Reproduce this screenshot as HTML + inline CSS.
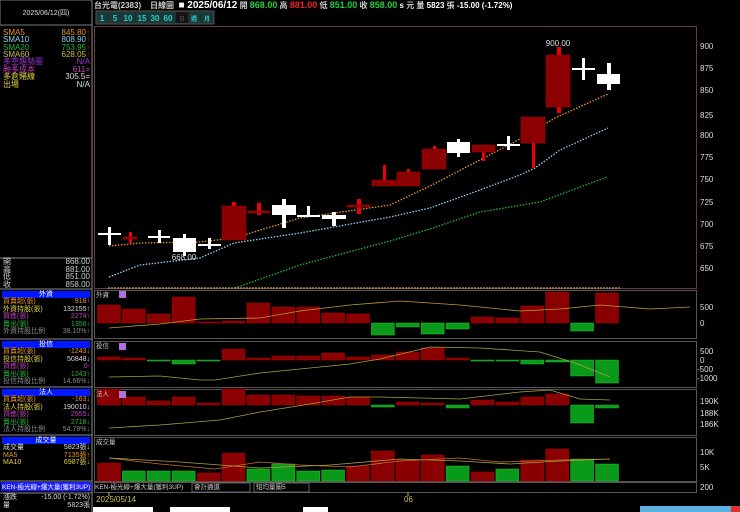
<!DOCTYPE html><html><head><meta charset="utf-8"><style>
body{margin:0;background:#000;width:740px;height:512px;overflow:hidden;position:relative;font-family:"Liberation Sans","Noto Sans CJK TC",sans-serif}
.t{position:absolute;font-size:8px;white-space:nowrap;line-height:9px}
.r{text-align:right}
</style></head><body>
<svg width="740" height="512" style="position:absolute;left:0;top:0" font-family="Liberation Sans, Noto Sans CJK TC, sans-serif">
<rect x="0" y="0" width="92" height="25" fill="none" stroke="#777" stroke-width="1"/>
<line x1="92" y1="0" x2="92" y2="512" stroke="#888"/>
<line x1="0" y1="258" x2="92" y2="258" stroke="#888"/>
<line x1="0" y1="289" x2="92" y2="289" stroke="#888"/>
<line x1="0" y1="339" x2="92" y2="339" stroke="#888"/>
<line x1="0" y1="387" x2="92" y2="387" stroke="#888"/>
<line x1="0" y1="435" x2="92" y2="435" stroke="#888"/>
<line x1="0" y1="481" x2="92" y2="481" stroke="#888"/>
<rect x="2" y="291" width="88" height="7" fill="#0018ff"/>
<rect x="2" y="341" width="88" height="7" fill="#0018ff"/>
<rect x="2" y="389" width="88" height="7" fill="#0018ff"/>
<rect x="2" y="437" width="88" height="7" fill="#0018ff"/>
<rect x="1" y="482" width="90" height="9" fill="#1a1aff"/>
<line x1="0" y1="493" x2="92" y2="493" stroke="#888"/>
<rect x="94.5" y="26.5" width="602" height="262" fill="none" stroke="#6a3a4a"/>
<rect x="94.5" y="290.5" width="602" height="48" fill="none" stroke="#555"/>
<rect x="94.5" y="341.5" width="602" height="46" fill="none" stroke="#555"/>
<rect x="94.5" y="389.5" width="602" height="46" fill="none" stroke="#555"/>
<rect x="94.5" y="437.5" width="602" height="44" fill="none" stroke="#555"/>
<rect x="94.5" y="482.5" width="602" height="10" fill="none" stroke="#555"/>
<rect x="96" y="11" width="118" height="13" fill="#2a2a2a" stroke="#555"/>
<g fill="#1a3a3a"><rect x="97" y="12" width="11" height="11"/><rect x="109" y="12" width="12" height="11"/><rect x="122" y="12" width="13" height="11"/><rect x="136" y="12" width="13" height="11"/><rect x="149" y="12" width="13" height="11"/><rect x="162" y="12" width="13" height="11"/></g>
<rect x="176" y="12" width="12" height="11" fill="#151515"/>
<rect x="189" y="12" width="11" height="11" fill="#1a3a3a"/><rect x="201" y="12" width="12" height="11" fill="#1a3a3a"/>
<g fill="#2fc9c9" font-size="8" font-weight="bold" text-anchor="middle"><text x="102" y="21">1</text><text x="115" y="21">5</text><text x="128" y="21">10</text><text x="142" y="21">15</text><text x="155" y="21">30</text><text x="168" y="21">60</text><text x="194" y="21" font-size="6">週</text><text x="207" y="21" font-size="6">月</text></g>
<text x="182" y="21" fill="#555" font-size="6" text-anchor="middle">日</text>
<polyline points="109,246 140,243 200,242 234,238 300,218 390,205 430,186 480,160 520,139 555,118 608,94" fill="none" stroke="#e8962a" stroke-width="1.3" stroke-dasharray="1.5,1.5"/>
<polyline points="109,277 140,265 200,258 234,243 300,233 390,217 430,208 480,190 520,175 535,168 560,150 608,128" fill="none" stroke="#8fd0ee" stroke-width="1.3" stroke-dasharray="1.5,1.5"/>
<polyline points="235,288 300,265 390,241 430,229 480,212 540,202 607,177" fill="none" stroke="#1fb83a" stroke-width="1.3" stroke-dasharray="1.5,1.5"/>
<line x1="108" y1="288" x2="620" y2="288" stroke="#c9a54a" stroke-width="1.3" stroke-dasharray="2,1"/>
<g fill="#fff">
<rect x="98" y="233" width="23" height="2"/><rect x="108" y="227" width="3" height="18"/>
<rect x="148" y="236" width="22" height="2"/><rect x="158" y="230" width="3" height="13"/>
<rect x="173" y="238" width="23" height="14"/><rect x="183" y="234" width="3" height="22"/>
<rect x="198" y="244" width="23" height="2"/><rect x="208" y="238" width="3" height="11"/>
<rect x="272" y="205" width="24" height="10"/><rect x="282" y="199" width="4" height="29"/>
<rect x="297" y="215" width="23" height="2"/><rect x="307" y="206" width="3" height="11"/>
<rect x="322" y="215" width="24" height="4"/><rect x="332" y="212" width="4" height="14"/>
<rect x="447" y="142" width="23" height="11"/><rect x="457" y="139" width="3" height="18"/>
<rect x="497" y="144" width="23" height="2"/><rect x="507" y="136" width="3" height="14"/>
<rect x="572" y="68" width="23" height="2"/><rect x="582" y="58" width="3" height="22"/>
<rect x="597" y="74" width="23" height="10"/><rect x="607" y="63" width="4" height="27"/>
</g>
<g fill="#ee0000">
<rect x="129" y="232" width="3" height="11"/><rect x="232" y="202" width="4" height="4"/><rect x="257" y="203" width="4" height="12"/>
<rect x="357" y="199" width="4" height="15"/><rect x="383" y="165" width="3" height="21"/><rect x="407" y="169" width="3" height="4"/>
<rect x="433" y="146" width="3" height="4"/><rect x="482" y="152" width="3" height="9"/><rect x="532" y="143" width="3" height="25"/>
<rect x="557" y="47" width="4" height="8"/><rect x="557" y="107" width="4" height="6"/>
</g>
<g fill="#8a0000" stroke="#b00000" stroke-width="0.5">
<rect x="123" y="237" width="14" height="2"/><rect x="222" y="206" width="24" height="34"/><rect x="248" y="211" width="22" height="2"/>
<rect x="347" y="205" width="23" height="2"/><rect x="372" y="180" width="24" height="6"/><rect x="397" y="172" width="23" height="14"/>
<rect x="422" y="149" width="24" height="20"/><rect x="472" y="145" width="23" height="7"/><rect x="521" y="117" width="24" height="26"/>
<rect x="546" y="55" width="24" height="52"/>
</g>
<text x="558" y="46" fill="#ddd" font-size="8" text-anchor="middle">900.00</text>
<text x="184" y="260" fill="#ddd" font-size="8" text-anchor="middle">668.00</text>
<g fill="#ddd" font-size="8"><text x="700" y="49">900</text><text x="700" y="71">875</text><text x="700" y="93">850</text><text x="700" y="118">825</text><text x="700" y="138">800</text><text x="700" y="160">775</text><text x="700" y="182">750</text><text x="700" y="205">725</text><text x="700" y="227">700</text><text x="700" y="249">675</text><text x="700" y="271">650</text></g>
<g id="bars"></g>
<g fill="#ddd" font-size="8"><text x="700" y="310">500</text><text x="700" y="326">0</text>
<text x="700" y="354">500</text><text x="700" y="363">0</text><text x="697" y="372">-500</text><text x="697" y="381">-1000</text>
<text x="700" y="404">190K</text><text x="700" y="416">188K</text><text x="700" y="427">186K</text>
<text x="700" y="455">10K</text><text x="700" y="470">5K</text><text x="700" y="490">200</text></g>
<rect x="119" y="291" width="7" height="7" fill="#b070e0"/><rect x="119" y="343" width="7" height="7" fill="#b070e0"/><rect x="119" y="391" width="7" height="7" fill="#b070e0"/>
<polyline points="109,328 160,324 200,319 260,318 300,311 350,305 400,301 460,305 520,311 560,309 600,305 650,309 690,307" fill="none" stroke="#b8a030" stroke-width="0.8"/>
<polyline points="109,377 160,376 200,380 215,380 260,373 300,369 350,364 380,359 430,347 480,348 540,352 575,363 610,377" fill="none" stroke="#a8a040" stroke-width="0.8"/>
<polyline points="109,428 160,425 220,420 260,412 310,404 350,397 380,397 460,399 520,392 550,390 580,399 610,400" fill="none" stroke="#a8a040" stroke-width="0.8"/>
<polyline points="109,458 160,464 215,469 260,462 300,465 350,467 400,461 460,458 500,462 560,460 610,459" fill="none" stroke="#c07030" stroke-width="0.8"/>
<polyline points="109,458 180,462 260,468 330,465 400,459 460,461 510,464 560,461 610,459" fill="none" stroke="#a8a040" stroke-width="0.8"/>
<rect x="192" y="483" width="58" height="9" fill="#000" stroke="#888" stroke-width="0.7"/>
<rect x="254" y="483" width="55" height="9" fill="#000" stroke="#888" stroke-width="0.7"/>
<line x1="109" y1="492" x2="109" y2="496" stroke="#c9c04a"/><line x1="408" y1="492" x2="408" y2="496" stroke="#c9c04a"/>
<text x="96" y="502" fill="#c9c04a" font-size="8">2025/05/14</text><text x="404" y="502" fill="#c9c04a" font-size="8">06</text>
<rect x="93" y="507" width="60" height="6" fill="#fff"/><rect x="170" y="507" width="60" height="6" fill="#fff"/><rect x="303" y="507" width="25" height="6" fill="#fff"/>
<rect x="640" y="506" width="100" height="6" fill="#5ab0e0"/><rect x="731" y="506" width="9" height="6" fill="#e03030"/>
</svg>
<script>
var g=document.getElementById('bars'),s='';
function b(z,arr,cols){arr.forEach(function(v,i){var x=97.5+24.9*i,t=Math.min(v,z),h=Math.abs(v-z)||1;var c=cols?cols[i]:(v<=z?'r':'g');s+='<rect x="'+x.toFixed(1)+'" y="'+t+'" width="23" height="'+h+'" fill="'+(c=='r'?'#8a0000':'#0a9a1a')+'" stroke="'+(c=='r'?'#b00000':'#20c030')+'" stroke-width="0.5"/>';});}
b(323,[305,309,314,297,322,321,303,307,307,313,314,335,327,334,329,317,318,306,292,331,293]);
b(360,[357,358,361,364,361,349,358,356,356,353,357,355,352,348,358,361,361,364,362,376,383],'rrgggrrrrrrrrrrggggggg'.split(''));
b(405,[389,397,401,397,403,389,395,395,396,396,397,407,402,403,408,400,402,397,394,423,408]);
b(481,[463,471,471,471,473,453,469,464,471,470,466,451,460,455,466,472,469,460,449,459,464],'rgggrrggggrrrrgrgrrgg'.split(''));
g.innerHTML=s;
</script>
<div class="t" style="left:0;top:9px;width:92px;text-align:center;color:#ddd;font-size:7px">2025/06/12(四)</div>
<div class="t" style="left:3px;top:28px;color:#e8962a">SMA5</div><div class="t r" style="right:650px;top:28px;color:#e8962a">845.80<span style="color:#f00">↑</span></div>
<div class="t" style="left:3px;top:35px;color:#8fd0ee">SMA10</div><div class="t r" style="right:650px;top:35px;color:#8fd0ee">808.90<span style="color:#f00">↑</span></div>
<div class="t" style="left:3px;top:43px;color:#1fb83a">SMA20</div><div class="t r" style="right:650px;top:43px;color:#1fb83a">753.95<span style="color:#f00">↑</span></div>
<div class="t" style="left:3px;top:50px;color:#c9c04a">SMA60</div><div class="t r" style="right:650px;top:50px;color:#c9c04a">628.05<span style="color:#f00">↑</span></div>
<div class="t" style="left:3px;top:57px;color:#a030e0">多空趨勢圖</div><div class="t r" style="right:650px;top:57px;color:#a030e0">N/A</div>
<div class="t" style="left:3px;top:65px;color:#c040c0">融多成本</div><div class="t r" style="right:650px;top:65px;color:#c040c0">611=</div>
<div class="t" style="left:3px;top:72px;color:#e0d040">多倉賭線</div><div class="t r" style="right:650px;top:72px;color:#ddd">305.5=</div>
<div class="t" style="left:3px;top:80px;color:#e0d040">出場</div><div class="t r" style="right:650px;top:80px;color:#ddd">N/A</div>
<div class="t" style="left:3px;top:258px;color:#ccc;line-height:7.5px">開<br>高<br>低<br>收</div>
<div class="t r" style="right:650px;top:258px;color:#ccc;line-height:7.5px">868.00<br>881.00<br>851.00<br>858.00</div>
<div class="t" style="left:0;top:290px;width:92px;text-align:center;color:#fff;font-size:7px">外資</div>
<div class="t" style="left:3px;top:298px;line-height:7.5px;font-size:7px"><span style="color:#e8962a">買賣超(張)</span><br><span style="color:#e0d040">外資持股(張)</span><br><span style="color:#c040c0">買進(張)</span><br><span style="color:#1fb83a">賣出(張)</span><br><span style="color:#888">外資持股比例</span></div>
<div class="t r" style="right:650px;top:298px;line-height:7.5px;font-size:7px;color:#ddd"><span style="color:#e8962a">918↑</span><br>132155↑<br><span style="color:#c040c0">2274↑</span><br><span style="color:#1fb83a">1356↑</span><br><span style="color:#888">38.10%↑</span></div>
<div class="t" style="left:0;top:340px;width:92px;text-align:center;color:#fff;font-size:7px">投信</div>
<div class="t" style="left:3px;top:348px;line-height:7.5px;font-size:7px"><span style="color:#e8962a">買賣超(張)</span><br><span style="color:#e0d040">投信持股(張)</span><br><span style="color:#c040c0">買進(張)</span><br><span style="color:#1fb83a">賣出(張)</span><br><span style="color:#888">投信持股比例</span></div>
<div class="t r" style="right:650px;top:348px;line-height:7.5px;font-size:7px;color:#ddd"><span style="color:#e8962a">-1243↓</span><br>50848↓<br><span style="color:#c040c0">0-</span><br><span style="color:#1fb83a">1243↑</span><br><span style="color:#888">14.66%↓</span></div>
<div class="t" style="left:0;top:388px;width:92px;text-align:center;color:#fff;font-size:7px">法人</div>
<div class="t" style="left:3px;top:396px;line-height:7.5px;font-size:7px"><span style="color:#e8962a">買賣超(張)</span><br><span style="color:#e0d040">法人持股(張)</span><br><span style="color:#c040c0">買進(張)</span><br><span style="color:#1fb83a">賣出(張)</span><br><span style="color:#888">法人持股比例</span></div>
<div class="t r" style="right:650px;top:396px;line-height:7.5px;font-size:7px;color:#ddd"><span style="color:#e8962a">-163↓</span><br>190010↓<br><span style="color:#c040c0">2555↓</span><br><span style="color:#1fb83a">2718↓</span><br><span style="color:#888">54.78%↓</span></div>
<div class="t" style="left:0;top:436px;width:92px;text-align:center;color:#fff;font-size:7px">成交量</div>
<div class="t" style="left:3px;top:444px;line-height:7.5px;font-size:7px"><span style="color:#ddd">成交量</span><br><span style="color:#e8962a">MA5</span><br><span style="color:#e0d040">MA10</span></div>
<div class="t r" style="right:650px;top:444px;line-height:7.5px;font-size:7px;color:#ddd">5823張↓<br><span style="color:#e8962a">7135張↑</span><br><span style="color:#e0d040">6987張↓</span></div>
<div class="t" style="left:2px;top:483px;color:#fff;font-size:6.5px">KEN-極光線+爆大量(獲利3UP)</div>
<div class="t" style="left:3px;top:494px;line-height:8px;font-size:7px;color:#ddd">漲跌<br>量</div>
<div class="t r" style="right:650px;top:494px;line-height:8px;font-size:7px;color:#ddd">-15.00 (-1.72%)<br>5823張</div>
<div class="t" style="left:95px;top:483px;color:#ccc;font-size:6.5px">KEN-極光線+爆大量(獲利3UP)</div>
<div class="t" style="left:194px;top:483px;color:#ccc;font-size:6.5px">會計通道</div>
<div class="t" style="left:256px;top:483px;color:#ccc;font-size:6.5px">短均量圖5</div>
<div class="t" style="left:96px;top:291px;color:#ccc;font-size:6.5px">外資</div>
<div class="t" style="left:96px;top:342px;color:#ccc;font-size:6.5px">投信</div>
<div class="t" style="left:96px;top:390px;color:#ccc;font-size:6.5px">法人</div>
<div class="t" style="left:96px;top:438px;color:#ccc;font-size:6.5px">成交量</div>
<div class="t" style="left:94px;top:0px;font-size:8px;line-height:11px;color:#ccc;font-weight:bold">台光電(2383)&nbsp;&nbsp;&nbsp; 日線圖&nbsp; <span style="color:#fff;font-size:10px">■ 2025/06/12</span> 開 <span style="color:#1fd13a;font-size:9px">868.00</span> 高 <span style="color:#f02020;font-size:9px">881.00</span> 低 <span style="color:#1fd13a;font-size:9px">851.00</span> 收 <span style="color:#1fd13a;font-size:9px">858.00</span> <span style="color:#fff">s</span> 元 量 <span style="color:#fff">5823</span> 張 <span style="color:#fff">-15.00 (-1.72%)</span></div>
</body></html>
